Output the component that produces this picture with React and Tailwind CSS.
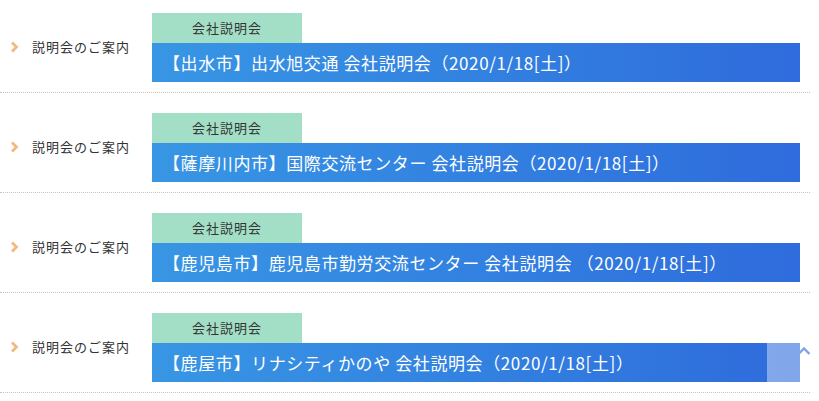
const items = [
    {city: "出水市", title: "出水旭交通 会社説明会（2020/1/18[土]）"},
    {city: "薩摩川内市", title: "国際交流センター 会社説明会（2020/1/18[土]）"},
    {city: "鹿児島市", title: "鹿児島市勤労交流センター 会社説明会 （2020/1/18[土]）"},
    {city: "鹿屋市", title: "リナシティかのや 会社説明会（2020/1/18[土]）"},
]

function Chevron() {
    return (
        <svg width="9" height="12" viewBox="0 0 9 12" className="shrink-0">
            <path d="M2 1.5 L6.5 6 L2 10.5" fill="none" stroke="#efb97f" strokeWidth="2.8" />
        </svg>
    )
}

function Row(props) {
    return (
        <div className="flex w-[810px] border-b border-dotted border-[#c4c4c4] pt-5 pb-[10px] pr-[10px]">
            <div className="mt-[24px] flex h-5 w-[152px] shrink-0 items-center gap-[13px] self-start pl-[10px]">
                <Chevron/>
                <span className="text-[13px] tracking-[1px] text-[#333] leading-5">説明会のご案内</span>
            </div>
            <div className="flex flex-1 flex-col">
                <div className="flex h-[30px] w-[150px] items-center justify-center bg-[#a2dfc6] text-[13px] tracking-[1px] text-[#333]">
                    会社説明会
                </div>
                <div className="flex h-[39px] items-center bg-linear-to-r from-[#3896e4] to-[#2f6bdc] pl-[11px] text-[17px] tracking-[0.6px] text-white">
                    【{props.city}】{props.title}
                </div>
            </div>
        </div>
    )
}

export default function App() {
    return (
        <div className="relative h-[401px] w-[819px] overflow-hidden bg-white" style={{fontFamily: '"Noto Sans CJK JP", "Noto Sans", sans-serif'}}>
            <div className="-mt-[7px]">
                {items.map((it) => <Row key={it.city} city={it.city} title={it.title}/>)}
            </div>
            <div className="absolute left-[767px] top-[343px] h-[39px] w-[33px] bg-white/40"></div>
            <svg className="absolute left-[797px] top-[346px]" width="14" height="10" viewBox="0 0 14 10">
                <path d="M1.5 8 L7 2.5 L12.5 8" fill="none" stroke="#7ea3ea" strokeWidth="2.4" />
            </svg>
        </div>
    )
}
